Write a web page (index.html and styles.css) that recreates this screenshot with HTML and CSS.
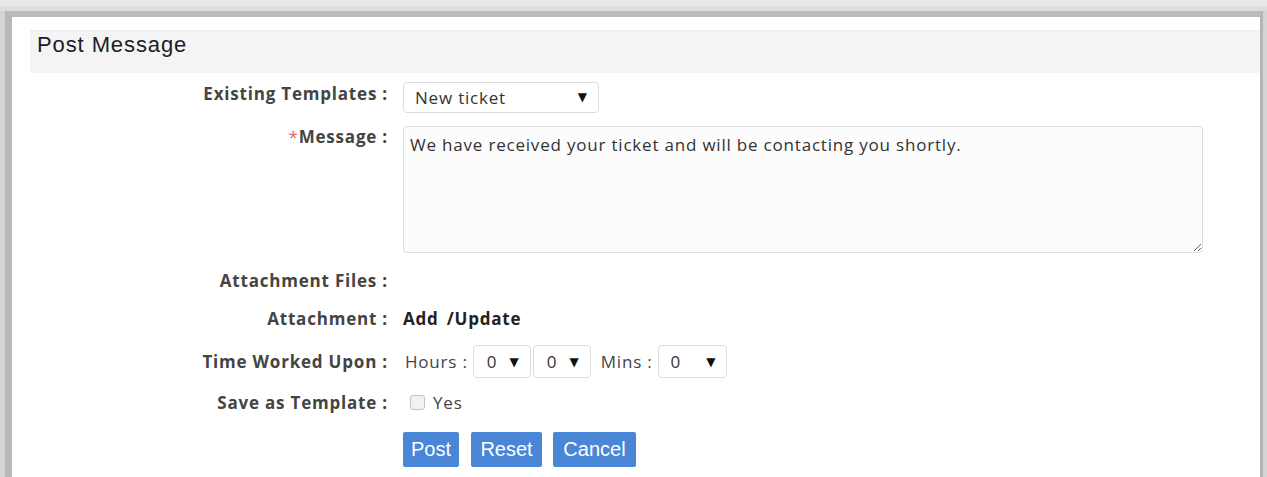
FILE: index.html
```html
<!DOCTYPE html>
<html lang="en">
<head>
<meta charset="utf-8">
<title>Post Message</title>
<link rel="stylesheet" href="styles.css">
</head>
<body>
<div class="window">
  <div class="panel-head">Post Message</div>
  <form class="form">
    <div class="row row-templates">
      <label class="label">Existing Templates :</label>
      <div class="field">
        <div class="dropdown dropdown-wide"><span>New ticket</span><span class="caret">&#9660;</span></div>
      </div>
    </div>
    <div class="row row-message">
      <label class="label label-top"><span class="req">*</span>Message :</label>
      <div class="field">
        <textarea class="message">We have received your ticket and will be contacting you shortly.</textarea>
      </div>
    </div>
    <div class="row row-files">
      <label class="label">Attachment Files :</label>
      <div class="field"></div>
    </div>
    <div class="row row-attach">
      <label class="label">Attachment :</label>
      <div class="field"><a class="link">Add</a><a class="link link-update">/Update</a></div>
    </div>
    <div class="row row-time">
      <label class="label">Time Worked Upon :</label>
      <div class="field time">
        <span class="unit">Hours :</span>
        <div class="dropdown dropdown-num"><span>0</span><span class="caret">&#9660;</span></div>
        <div class="dropdown dropdown-num"><span>0</span><span class="caret">&#9660;</span></div>
        <span class="unit unit-mins">Mins :</span>
        <div class="dropdown dropdown-mins"><span>0</span><span class="caret">&#9660;</span></div>
      </div>
    </div>
    <div class="row row-save">
      <label class="label">Save as Template :</label>
      <div class="field"><span class="checkbox"></span><span class="yes">Yes</span></div>
    </div>
    <div class="row row-actions">
      <span class="label"></span>
      <div class="field actions">
        <button type="button" class="btn btn-post">Post</button>
        <button type="button" class="btn btn-reset">Reset</button>
        <button type="button" class="btn btn-cancel">Cancel</button>
      </div>
    </div>
  </form>
</div>
</body>
</html>
```
FILE: styles.css
```css
html, body {
  margin: 0;
  height: 100%;
  overflow: hidden;
}

body {
  background: linear-gradient(#e8e8e8 0 6px, #dcdcdc 6px 11px, #d4d4d4 11px);
  padding: 11px 4px 0 5px;
  box-sizing: border-box;
  font-family: "Open Sans", "Liberation Sans", sans-serif;
  font-size: 17px;
  letter-spacing: 0.8px;
}

.window {
  background: #ffffff;
  border-top: 6px solid #bbbbbb;
  border-left: 7px solid #b8b8b8;
  border-right: 3px solid #b5b5b5;
  height: 100%;
  box-sizing: border-box;
  padding-top: 13px;
}

.panel-head {
  margin-left: 18px;
  height: 43px;
  box-sizing: border-box;
  background: #f4f4f4;
  border-top: 1px solid #ececec;
  padding: 2px 0 0 7px;
  font-family: "Liberation Sans", Arial, sans-serif;
  font-size: 22px;
  letter-spacing: 0.9px;
  color: #1c1c28;
  line-height: 24px;
}

.form {
  display: flex;
  flex-direction: column;
}

.row {
  display: flex;
  align-items: center;
}

.row-templates { margin-top: 9px; height: 30px; }
.row-message { margin-top: 14px; height: 127px; align-items: flex-start; }
.row-files { margin-top: 13px; height: 28px; }
.row-attach { margin-top: 10px; height: 28px; }
.row-time { margin-top: 13px; height: 33px; }
.row-save { margin-top: 10px; height: 28px; }
.row-actions { margin-top: 16px; height: 35px; }

.label {
  width: 376px;
  flex: none;
  text-align: right;
  font-weight: 700;
  color: #444444;
  padding-right: 15px;
  box-sizing: content-box;
  white-space: nowrap;
}

.row-templates .label {
  margin-top: -7px;
}

.label-top {
  line-height: 22px;
}

.req {
  color: #d9686e;
  font-weight: 400;
}

.field {
  display: flex;
  align-items: center;
  flex: 1;
}

.dropdown {
  display: flex;
  align-items: center;
  justify-content: space-between;
  box-sizing: border-box;
  border: 1px solid #dddddd;
  border-radius: 4px;
  background: #ffffff;
  color: #333333;
}

.caret {
  font-family: "DejaVu Sans", sans-serif;
  font-size: 12px;
  letter-spacing: 0;
  color: #111111;
}

.dropdown-wide {
  width: 196px;
  height: 31px;
  padding: 0 11px 0 11px;
}

.dropdown-num {
  width: 58px;
  height: 33px;
  padding: 0 11px 0 13px;
  margin-right: 2px;
}

.dropdown-mins {
  width: 69px;
  height: 33px;
  padding: 0 10px 0 12px;
}

.message {
  width: 800px;
  height: 127px;
  box-sizing: border-box;
  border: 1px solid #dcdcdc;
  border-radius: 4px;
  background: #fcfcfc;
  padding: 6px 6px;
  font-family: "Open Sans", "Liberation Sans", sans-serif;
  font-size: 17px;
  letter-spacing: 0.8px;
  color: #333333;
  line-height: 24px;
  margin: 0;
  resize: both;
}

.link {
  font-weight: 700;
  color: #222222;
}

.link-update {
  margin-left: 8px;
}

.time .unit {
  color: #444444;
  margin-right: 5px;
  margin-left: 2px;
}

.time .unit-mins {
  margin-left: 8px;
}

.checkbox {
  width: 13px;
  height: 13px;
  margin-left: 7px;
  border: 1px solid #c4c4c4;
  border-radius: 3px;
  background: #f2f2f2;
}

.yes {
  margin-left: 8px;
  color: #444444;
}

.actions {
  gap: 12px;
}

.btn {
  height: 35px;
  border: none;
  border-radius: 2px;
  background: #4a86d6;
  color: #ffffff;
  font-family: "Liberation Sans", Arial, sans-serif;
  font-size: 20px;
  letter-spacing: 0;
  padding: 0 8px;
  margin: 0;
}

.btn-post { width: 56px; }
.btn-reset { width: 71px; }
.btn-cancel { width: 83px; margin-left: -1px; }
```
